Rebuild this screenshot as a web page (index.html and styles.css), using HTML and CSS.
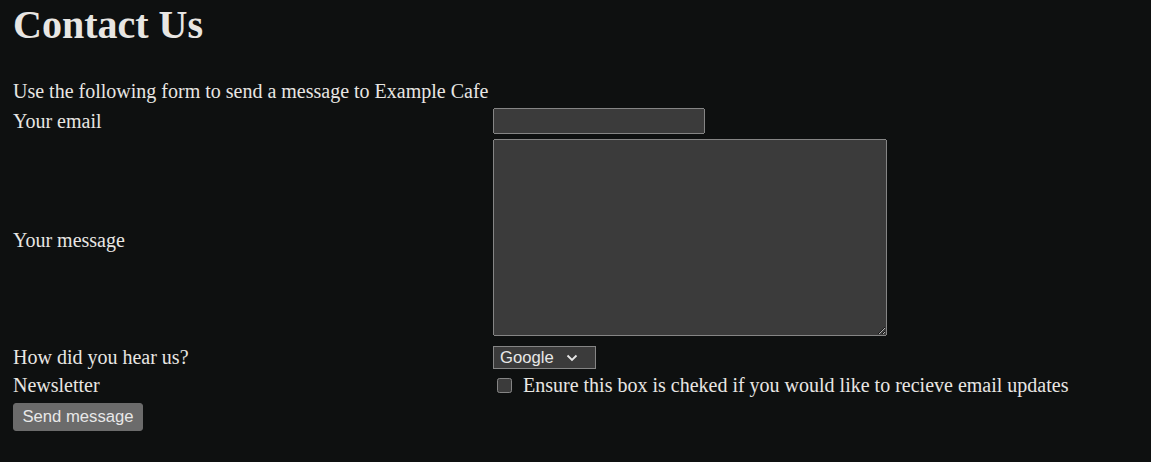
FILE: index.html
```html
<!DOCTYPE html>
<html lang="en">
<head>
<meta charset="utf-8">
<title>Contact Us</title>
<link rel="stylesheet" href="styles.css">
</head>
<body>
<main class="page">
  <h1 class="title">Contact Us</h1>
  <p class="intro">Use the following form to send a message to Example Cafe</p>
  <form class="form-grid">
    <label class="field-label" for="email">Your email</label>
    <div class="field"><input class="email-input" id="email" type="email"></div>

    <label class="field-label" for="message">Your message</label>
    <div class="field"><textarea class="message-input" id="message"></textarea></div>

    <label class="field-label" for="source">How did you hear us?</label>
    <div class="field">
      <span class="select-wrap">
        <select class="source-select" id="source">
          <option>Google</option>
          <option>Friend</option>
          <option>Other</option>
        </select>
        <svg class="select-arrow" width="12" height="8" viewBox="0 0 12 8" aria-hidden="true"><polyline points="1.5,1.5 6,6 10.5,1.5" fill="none" stroke="#e8e8e8" stroke-width="1.8"/></svg>
      </span>
    </div>

    <span class="field-label">Newsletter</span>
    <label class="field check-field"><input class="check" type="checkbox"><span class="check-text">Ensure this box is cheked if you would like to recieve email updates</span></label>

    <div class="submit-row"><button class="send-button" type="submit">Send message</button></div>
  </form>
</main>
</body>
</html>
```

FILE: styles.css
```css
:root {
  color-scheme: dark;
}

html, body {
  margin: 0;
  background: #0e1010;
}

body {
  color: #e8e6e3;
  font-family: "Liberation Serif", "Times New Roman", serif;
  font-size: 20px;
  line-height: 23px;
}

.page {
  padding: 2px 13px 20px;
}

.title {
  margin: 0;
  font-size: 40px;
  line-height: 46px;
  font-weight: bold;
}

.intro {
  margin: 31.5px 0 0;
}

.form-grid {
  margin-top: 5.5px;
  display: grid;
  grid-template-columns: 480px auto;
  row-gap: 5px;
  align-items: center;
}

.field-label {
  display: block;
}

.field {
  display: flex;
  align-items: center;
}

.email-input {
  box-sizing: border-box;
  width: 212px;
  height: 26px;
  margin: 0;
  font-family: "Liberation Sans", Arial, sans-serif;
  font-size: 16.67px;
}

.message-input {
  box-sizing: border-box;
  width: 394px;
  height: 197px;
  margin: 0 0 5px;
  font-family: "Liberation Mono", monospace;
  font-size: 16.67px;
}

.select-wrap {
  position: relative;
  display: inline-block;
}

.source-select {
  box-sizing: border-box;
  appearance: none;
  -webkit-appearance: none;
  display: block;
  height: 23px;
  width: 103px;
  margin: 0;
  padding: 0 24px 0 6px;
  font-family: "Liberation Sans", Arial, sans-serif;
  font-size: 16.67px;
  line-height: 21px;
  color: #e8e8e8;
  background: #3b3b3b;
  border: 1px solid #858585;
  border-radius: 0;
}

.select-arrow {
  position: absolute;
  left: 73px;
  top: 8px;
  pointer-events: none;
}

.check-field {
  display: flex;
  align-items: center;
}

.check {
  width: 15px;
  height: 15px;
  margin: 0 11px 0 4px;
}

.submit-row {
  grid-column: 1 / -1;
  padding-top: 0.5px;
}

.send-button {
  box-sizing: border-box;
  width: 130px;
  height: 28px;
  margin: 0;
  padding: 1px 7px;
  font-family: "Liberation Sans", Arial, sans-serif;
  font-size: 16.67px;
  color: #e8e8e8;
  background: #6b6b6b;
  border: 1px solid #6b6b6b;
  border-radius: 3px;
}
```
